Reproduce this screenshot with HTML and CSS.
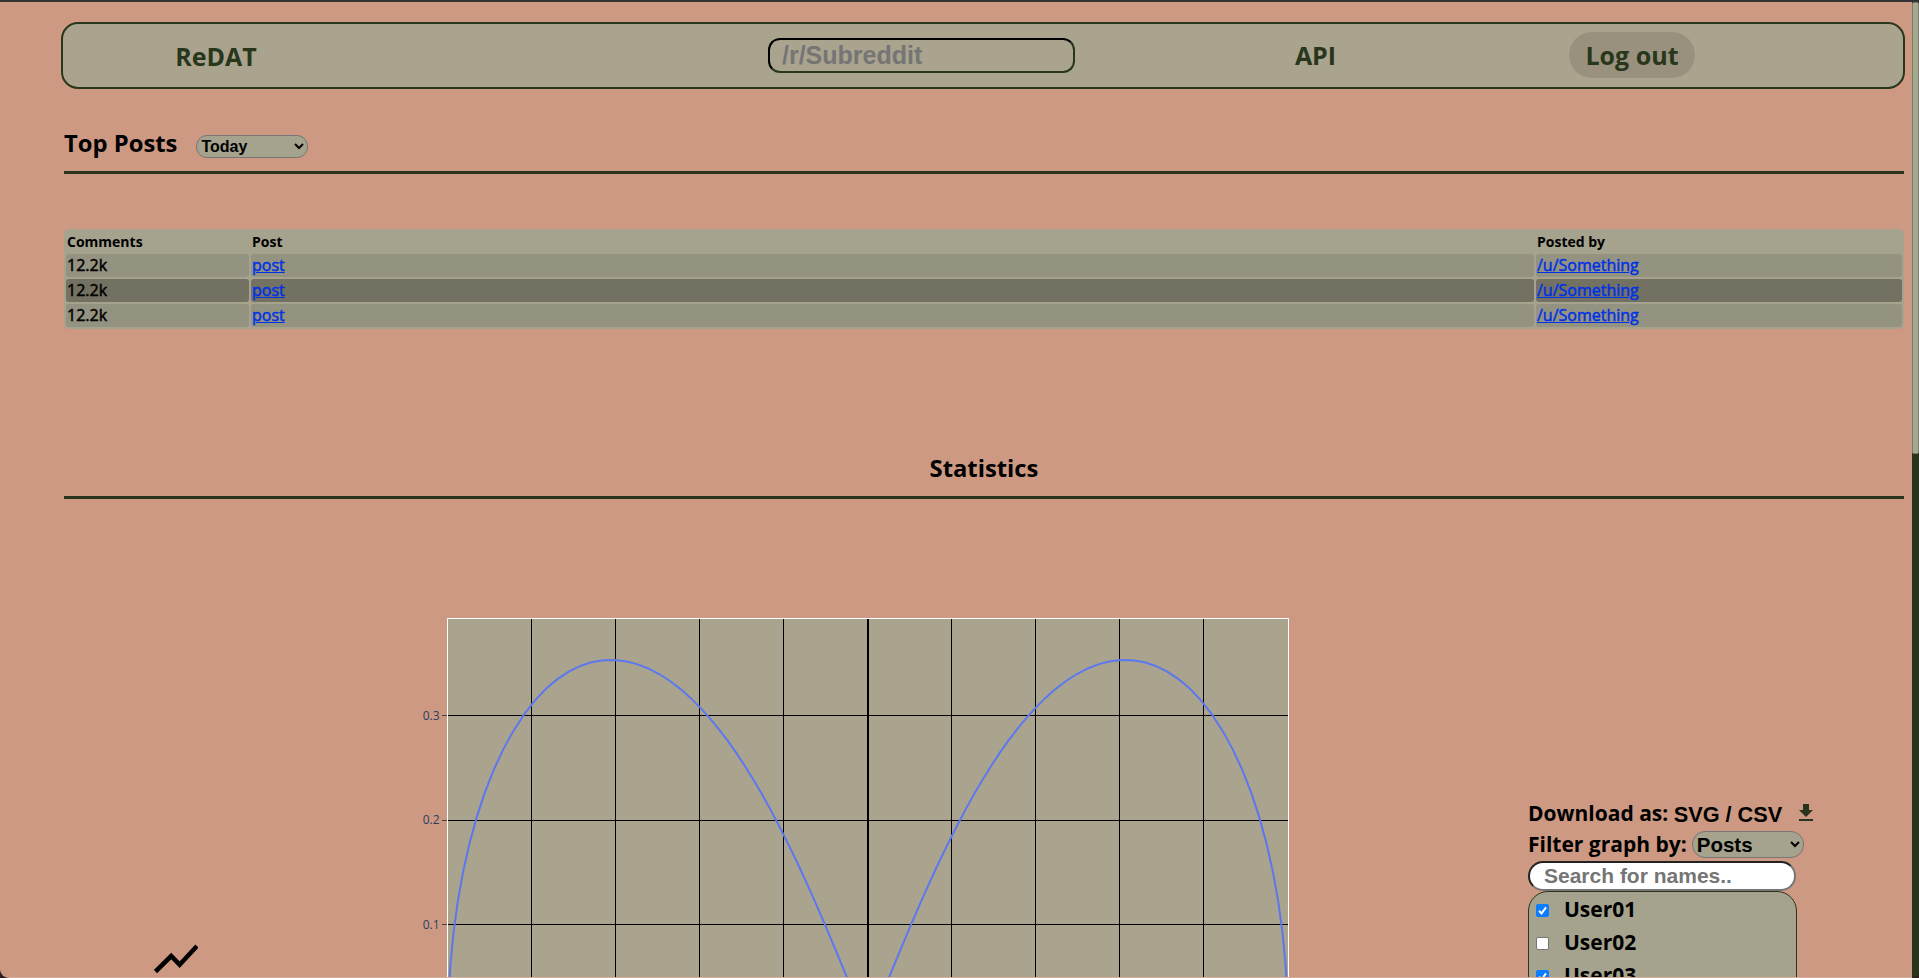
FILE: index.html
```html
<!DOCTYPE html>
<html lang="en">
<head>
<meta charset="utf-8">
<title>ReDAT</title>
<link rel="stylesheet" href="styles.css">
</head>
<body>
<div class="page">
  <nav class="nav">
    <div class="nav-cell nav-brand"><a class="nav-link">ReDAT</a></div>
    <div class="nav-cell nav-find"><input class="nav-search" type="text" placeholder="/r/Subreddit"></div>
    <div class="nav-cell nav-api"><a class="nav-link">API</a></div>
    <div class="nav-cell nav-user"><a class="nav-link logout">Log out</a></div>
  </nav>

  <section class="top-posts">
    <div class="heading-row">
      <h2 class="heading">Top Posts</h2>
      <select class="select select-period"><option>Today</option></select>
    </div>
    <table class="posts">
      <thead><tr><th class="col-comments">Comments</th><th>Post</th><th class="col-by">Posted by</th></tr></thead>
      <tbody>
        <tr><td>12.2k</td><td><a href="#">post</a></td><td><a href="#">/u/Something</a></td></tr>
        <tr><td>12.2k</td><td><a href="#">post</a></td><td><a href="#">/u/Something</a></td></tr>
        <tr><td>12.2k</td><td><a href="#">post</a></td><td><a href="#">/u/Something</a></td></tr>
      </tbody>
    </table>
  </section>

  <section class="statistics">
    <h2 class="heading heading-center">Statistics</h2>
    <div class="stats-body">
      <svg class="trend-icon" width="44" height="30" viewBox="0 0 44 30"><path d="M1.5 27.5 17.2 12 25.6 20.7 43 2" fill="none" stroke="#000" stroke-width="4.6"/></svg>
      <svg class="chart" width="900" height="378" viewBox="400 600 900 378">
        <rect x="447" y="618" width="842" height="400" fill="#aaa38d"/>
        <path d="M531.5 618v380M615.5 618v380M699.5 618v380M783.5 618v380M951.5 618v380M1035.5 618v380M1119.5 618v380M1203.5 618v380M447 715.5h842M447 820.5h842M447 924.5h842" stroke="#000" fill="none"/>
        <path d="M868 618v380" stroke="#000" stroke-width="2"/>
        <path d="M447.5 998V618.5h841V998" fill="none" stroke="#fff"/>
        <path d="M442 715.5h5M442 820.5h5M442 924.5h5" stroke="#444"/>
        <polyline id="curve" class="curve"/>
        <g class="axis-text"><text x="439.5" y="719.5">0.3</text><text x="439.5" y="824">0.2</text><text x="439.5" y="928.5">0.1</text></g>
      </svg>
      <div class="panel">
        <div class="panel-row"><span>Download as: </span><span class="format">SVG / CSV</span>
          <svg class="download-icon" width="14" height="17" viewBox="0 0 14 17"><path d="M4 0h6v6h4l-7 7-7-7h4zM0 15h14v2H0z" fill="#28351c"/></svg>
        </div>
        <div class="panel-row"><span>Filter graph by:</span>
          <select class="select select-filter"><option>Posts</option></select>
        </div>
        <input class="name-search" type="text" placeholder="Search for names..">
        <div class="names">
          <label class="name"><span class="box box-on"><svg width="13" height="13" viewBox="0 0 13 13"><path d="M3 6.8 5.5 9.5 10 3.3" fill="none" stroke="#fff" stroke-width="2"/></svg></span>User01</label>
          <label class="name"><span class="box"></span>User02</label>
          <label class="name"><span class="box box-on"><svg width="13" height="13" viewBox="0 0 13 13"><path d="M3 6.8 5.5 9.5 10 3.3" fill="none" stroke="#fff" stroke-width="2"/></svg></span>User03</label>
        </div>
      </div>
    </div>
  </section>
</div>
<div class="scrollbar"><div class="thumb"></div></div>
<script src="chart.js"></script>
</body>
</html>
```
FILE: chart.js
```js
// Lemniscate: x = cos t / (1 + sin² t), y = x · sin t
const points = [];
for (let i = 0; i <= 200; i++) {
  const t = (i / 200) * 2 * Math.PI;
  const x = Math.cos(t) / (1 + Math.sin(t) ** 2);
  const y = x * Math.sin(t);
  points.push((868 + x * 420).toFixed(2) + ',' + (1029.7 - y * 1046).toFixed(2));
}
document.getElementById('curve').setAttribute('points', points.join(' '));
```
FILE: styles.css
```css
* { box-sizing: border-box; }
html { background: #30201d; }
body {
  margin: 0;
  height: 978px;
  overflow: hidden;
  display: flex;
  border-top: 2px solid #333133;
  font-family: "Open Sans", sans-serif;
  color: #000;
}
.page {
  width: 1912px;
  height: 976px;
  overflow: hidden;
  padding: 20px 7px 0 61px;
  background: #cd9983;
  border-bottom: 1px solid #d8ad9a;
  border-bottom-left-radius: 9px;
}
.nav {
  height: 67px;
  border: 2px solid #28371c;
  border-radius: 17px;
  background: #aaa38d;
  display: grid;
  grid-template-columns: 306px 399px 307px 481px 152px;
  align-items: center;
  font-weight: 700;
  font-size: 25px;
  line-height: 34px;
  color: #28371c;
}
.nav-cell { display: flex; justify-content: center; align-items: center; }
.nav-find { grid-column: 3; }
.nav-api, .nav-user { padding-bottom: 2px; }
.nav-search {
  width: 307px;
  height: 35px;
  border: 2px solid;
  border-color: #000 #28371c #28371c #000;
  border-radius: 12px;
  background: transparent;
  padding: 0 12px;
  font: 700 25px "Liberation Sans", sans-serif;
}
input::placeholder { color: #757575; opacity: 1; }
.logout {
  height: 46px;
  width: 126px;
  line-height: 46px;
  text-align: center;
  border-radius: 23px;
  background: #99917e;
}
.top-posts { margin-left: 3px; width: 1840px; }
.heading-row {
  height: 85px;
  padding-top: 38px;
  border-bottom: 3px solid #28351c;
  display: flex;
  align-items: flex-start;
}
.heading { margin: 0; font-size: 23.8px; line-height: 33px; font-weight: 700; }
.select {
  border: 1px solid #767676;
  background: #a5a38d;
  color: #000;
  padding: 0;
  font-family: "Liberation Sans", sans-serif;
  font-weight: 700;
}
.select-period {
  width: 112px;
  height: 23px;
  margin: 8px 0 0 19px;
  border-radius: 11px;
  font-size: 16px;
}
.posts {
  width: 1840px;
  height: 100px;
  margin-top: 55px;
  table-layout: fixed;
  border-spacing: 2px;
  border-radius: 5px;
  background: #a5a38d;
  font-size: 16px;
  line-height: 21px;
  font-weight: 500;
}
.posts th { height: 21px; padding: 1px; text-align: left; font-size: 14px; line-height: 19px; font-weight: 700; }
.posts td { height: 23px; padding: 1px; border-radius: 3px; background: #949280; -webkit-text-stroke: 0.5px; }
.posts tr:nth-child(2) td { background: #737161; }
.col-comments { width: 183px; }
.col-by { width: 366px; }
.posts a { color: #0032e6; text-decoration: underline; }
.statistics { margin-left: 3px; width: 1840px; }
.heading-center {
  height: 170px;
  padding-top: 123px;
  border-bottom: 3px solid #28351c;
  text-align: center;
}
.stats-body { display: flex; align-items: flex-start; padding-top: 101px; }
.trend-icon { margin: 344px 0 0 90px; }
.chart { margin-left: 202px; flex: none; }
.curve { fill: none; stroke: #5c78f0; stroke-width: 2; }
.axis-text { font: 12px "Open Sans", sans-serif; fill: #2a3f5f; text-anchor: end; }
.panel { margin: 198px 0 0 228px; width: 300px; font-size: 21px; font-weight: 700; }
.panel-row { height: 31px; line-height: 31px; display: flex; align-items: center; }
.panel-row span { white-space: pre; }
.download-icon { margin: -3px 0 0 17px; }
.format { font-family: "Liberation Sans", sans-serif; font-size: 21.7px; padding-top: 1px; }
.select-filter { width: 112px; height: 27px; margin-left: 5px; border-radius: 13px; font-size: 20.5px; }
.name-search {
  display: block;
  width: 268px;
  height: 30px;
  margin-top: 1px;
  border: 2px solid;
  border-color: #222 #767676 #767676 #222;
  border-radius: 15px;
  background: #fff;
  padding: 0 14px;
  font: 700 21px "Liberation Sans", sans-serif;
}
.names {
  width: 269px;
  height: 200px;
  border: 1px solid #28351c;
  border-radius: 20px;
  background: #a5a38d;
  padding: 0 7px;
}
.name { display: flex; align-items: center; height: 33px; }
.box { width: 13px; height: 13px; margin: 4px 15px 0 0; border: 1px solid #767676; border-radius: 2px; background: #fff; display: flex; }
.box-on { border: 0; background: #0a7cff; }
.scrollbar { width: 7px; height: 976px; background: #28351c; border-bottom-right-radius: 8px; }
.thumb { height: 452px; background: #a2ab8b; border: 1px solid #7f7b72; border-radius: 2px; }
```
